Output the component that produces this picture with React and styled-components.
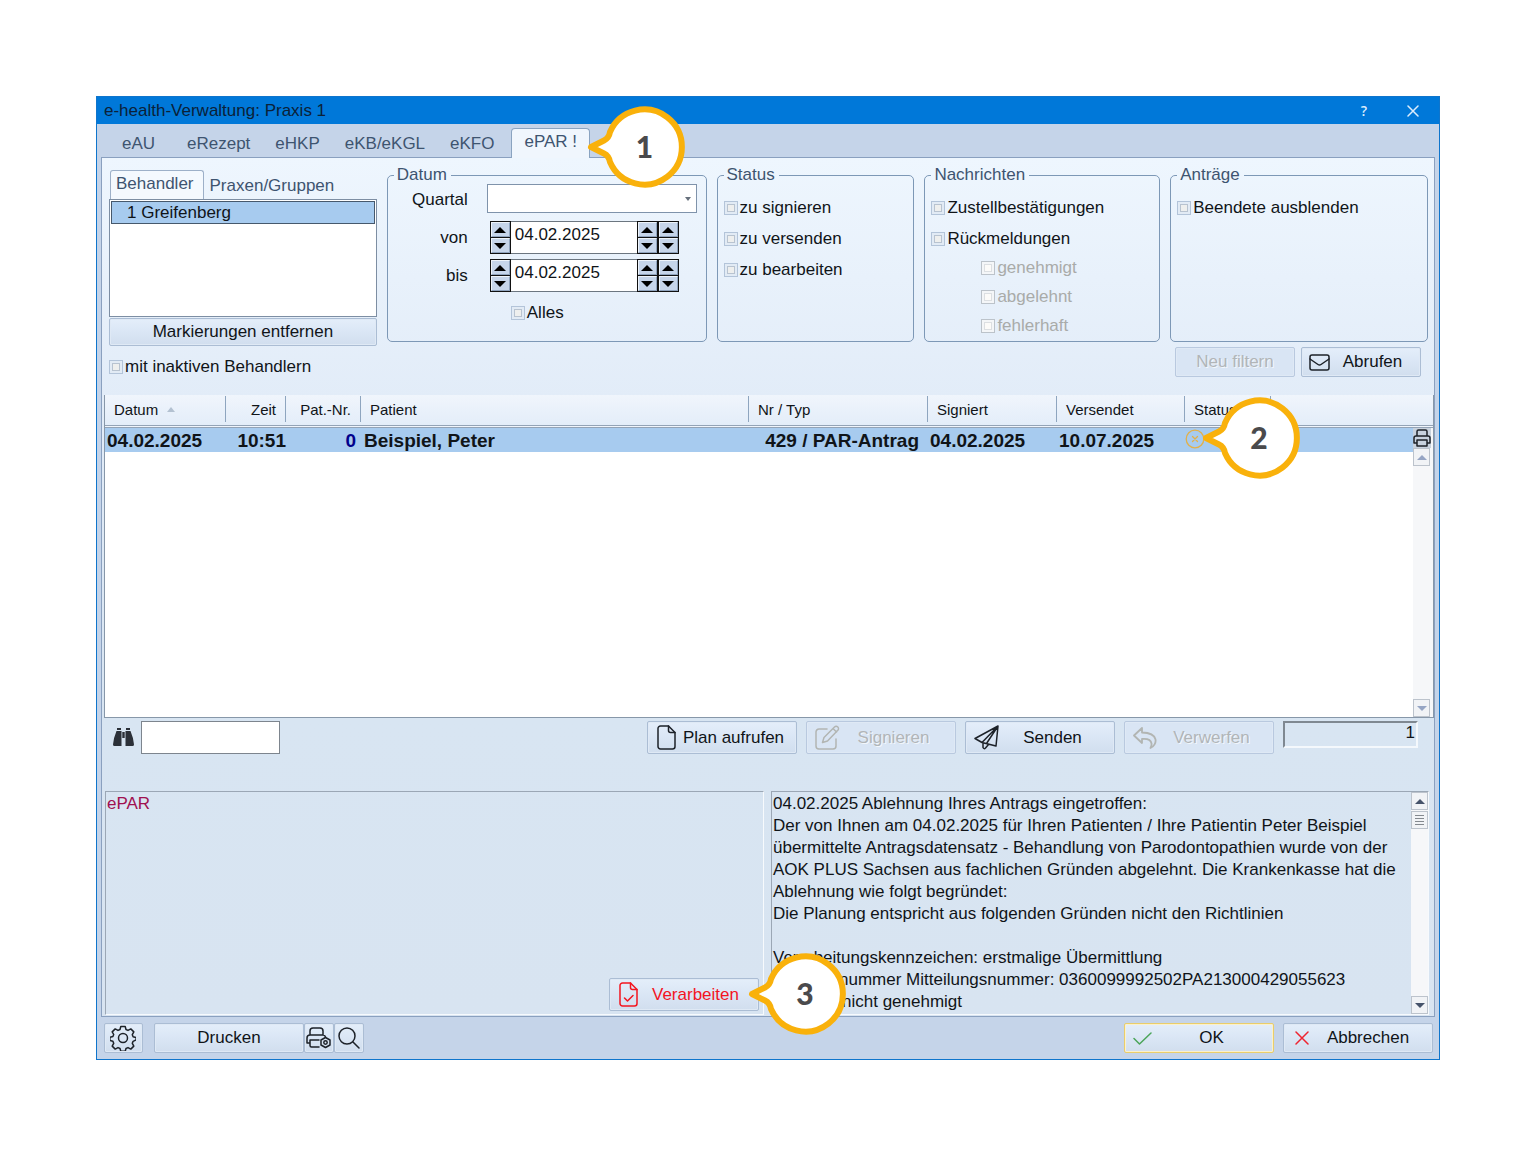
import React from 'react';
import styled, { createGlobalStyle } from 'styled-components';

const GlobalStyle = createGlobalStyle`
  *, *::before, *::after {
    box-sizing: border-box;
  }

  body {
    margin: 0;
    background: #fff;
    color: #101418;
    font-family: 'Liberation Sans', Arial, sans-serif;
    font-size: 17px;
    line-height: 20px;
  }

  button, input, select {
    font: inherit;
    color: inherit;
  }
`;

const Page = styled.main`
  padding: 96px;
`;

const Window = styled.section`
  border: 1px solid #0f75cc;
  background: #c5d4e9;
`;

/* ---------- title bar ---------- */

const TitleBar = styled.header`
  display: flex;
  align-items: center;
  height: 27px;
  padding: 0 16px 0 7px;
  background: #0078d9;
`;

const Title = styled.h1`
  flex: 1;
  margin: 0;
  font-size: 17px;
  font-weight: 400;
  color: #0b2138;
`;

const TitleButton = styled.button`
  display: flex;
  align-items: center;
  justify-content: center;
  width: 20px;
  height: 20px;
  margin-left: 29px;
  padding: 0;
  border: 0;
  background: none;
  color: #dcedfc;
  font-family: 'Open Sans', sans-serif;
  font-size: 14px;
  font-weight: 600;
`;

/* ---------- tabs ---------- */

const MainTabs = styled.nav`
  display: flex;
  align-items: flex-end;
  gap: 1px;
  height: 33px;
  padding-left: 13px;
`;

const MainTab = styled.button`
  position: relative;
  z-index: ${(p) => (p.$active ? 2 : 0)};
  height: ${(p) => (p.$active ? '30px' : '27px')};
  min-width: ${(p) => p.$width || '0'};
  margin: ${(p) => (p.$active ? '0 0 -1px 4px' : '0')};
  padding: ${(p) => (p.$active ? '0 12px 4px' : '0 12px')};
  border: ${(p) => (p.$active ? '1px solid #8aa3c0' : '0')};
  border-bottom: 0;
  border-radius: 4px 4px 0 0;
  background: ${(p) => (p.$active ? '#f0f6fd' : 'none')};
  color: #3e5470;
  text-align: left;
  white-space: nowrap;
`;

const Panel = styled.div`
  margin: 0 4px;
  border: 1px solid #8aa0bf;
  background: linear-gradient(#eef6fe, #e2ecf8 240px, #d8e5f2 560px, #d8e4f1);
`;

/* ---------- filters ---------- */

const Filters = styled.div`
  display: grid;
  grid-template-columns: 268fr 320fr 198fr 236fr 258fr;
  grid-template-rows: auto 30px;
  gap: 5px 10px;
  padding: 8px 6px 18px 7px;
`;

const DoctorColumn = styled.div`
  display: flex;
  flex-direction: column;
  grid-row: 1 / 3;
  padding-top: 4px;
`;

const SmallTabs = styled.div`
  display: flex;
  padding-left: 1px;
`;

const SmallTab = styled.button`
  height: 29px;
  padding: ${(p) => (p.$active ? '0 9px 2px 5px' : '3px 6px 0')};
  border: ${(p) => (p.$active ? '1px solid #9db0c8' : '0')};
  border-bottom: 0;
  border-radius: 3px 3px 0 0;
  background: ${(p) => (p.$active ? '#f4f9fe' : 'none')};
  color: #3e5470;
  white-space: nowrap;
`;

const ListBox = styled.ul`
  min-height: 118px;
  margin: 0 0 1px;
  padding: 1px;
  border: 1px solid #7d8ea3;
  background: #fff;
  list-style: none;
`;

const ListItem = styled.li`
  height: 23px;
  padding: 1px 0 0 15px;
  border: 1px dotted #222;
  outline: 1px solid #46586c;
  outline-offset: -1px;
  background: #a7cbef;
`;

const Check = styled.label`
  display: flex;
  align-items: center;
  gap: 2px;
  color: ${(p) => (p.$disabled ? '#a9aba9' : 'inherit')};
  white-space: nowrap;

  input {
    flex: none;
    appearance: none;
    width: 14px;
    height: 14px;
    margin: 0;
    border: 1px solid #b3c4d9;
    background: ${(p) => (p.$disabled ? '#fcfbf9' : '#eeefee')};
    box-shadow: inset 0 0 0 2px #e2ebf5, inset 0 0 0 3px #b8c3d0;
  }

  input:disabled {
    border-color: #bcc3ca;
    box-shadow: inset 0 0 0 2px #f4f6f8, inset 0 0 0 3px #dcdfe2;
  }
`;

const InactiveRow = styled.div`
  padding-top: 11px;
`;

const Group = styled.fieldset`
  min-width: 0;
  height: 176px;
  margin: 0;
  padding: 0 6px;
  border: 1px solid #7d98b6;
  border-radius: 5px;

  legend {
    padding: 0 4px 0 3px;
    color: #3e5470;
    line-height: 18px;
  }
`;

const Checks = styled.div`
  display: flex;
  flex-direction: column;
  gap: 11px;
  padding-top: 14px;
`;

const SubChecks = styled.div`
  display: flex;
  flex-direction: column;
  gap: 9px;
  margin-top: -2px;
  padding-left: 50px;
`;

const DateForm = styled.div`
  display: grid;
  grid-template-columns: 74px 1fr;
  column-gap: 19px;
  row-gap: 5px;
  align-items: center;

  > label {
    text-align: right;
  }
`;

const SelectWrap = styled.div`
  position: relative;
  max-width: 210px;
  margin-bottom: 3px;

  &::after {
    content: '';
    position: absolute;
    top: 13px;
    right: 6px;
    border: 3px solid transparent;
    border-top: 4px solid #66707c;
    border-bottom: 0;
    pointer-events: none;
  }
`;

const Select = styled.select`
  display: block;
  appearance: none;
  width: 100%;
  height: 29px;
  border: 1px solid #7f93ab;
  border-radius: 0;
  background: #fff;
`;

const DateBox = styled.div`
  display: flex;
  height: 33px;
  padding-left: 3px;
`;

const DateInput = styled.input`
  width: 126px;
  min-width: 0;
  padding: 0 4px 5px;
  border: 1px solid #6c7680;
  border-width: 1px 0;
  border-radius: 0;
  background: #fff;
`;

const Spinner = styled.span`
  display: flex;
  flex-direction: column;
  width: 21px;
  border: 1px solid #111;
  background: #111;
  gap: 1px;
`;

const SpinButton = styled.button`
  display: flex;
  flex: 1;
  align-items: center;
  justify-content: center;
  padding: 0;
  border: 1px solid;
  border-color: #eef4fb #8fa3bd #8fa3bd #eef4fb;
  background: #c6d5ea;

  &::before {
    content: '';
    border: 6px solid transparent;
    border-${(p) => (p.$up ? 'bottom' : 'top')}: 6px solid #000;
    border-${(p) => (p.$up ? 'top' : 'bottom')}: 0;
  }
`;

const AllRow = styled.div`
  padding: 6px 0 0 24px;
`;

const FilterActions = styled.div`
  display: flex;
  grid-column: 2 / -1;
  justify-content: flex-end;
  gap: 6px;
  padding-right: 7px;
`;

const Button = styled.button`
  position: relative;
  display: flex;
  flex: none;
  align-items: center;
  gap: ${(p) => p.$gap || '0'};
  width: ${(p) => p.$width || '150px'};
  height: ${(p) => p.$height || '33px'};
  padding: 0 ${(p) => p.$pad || '8px'};
  border: 1px solid ${(p) => (p.$primary ? '#e9cd6b' : '#abbdd4')};
  border-radius: 2px;
  background: linear-gradient(#e4eefa, #dae6f5 50%, #d1deee);
  box-shadow: inset 0 0 0 1px ${(p) => (p.$primary ? '#fbf1cb' : '#dfe9f5')};
  color: ${(p) => (p.$danger ? '#f3151f' : '#101418')};
  white-space: nowrap;

  &:disabled {
    border-color: #b9c9df;
    background: #d9e5f4;
    color: #b1b5b8;
    text-shadow: 1px 1px 0 #f3f7fb;
  }

  svg {
    flex: none;
  }
`;

const Caption = styled.span`
  flex: 1;
  text-align: center;
`;

/* ---------- table ---------- */

const TableArea = styled.div`
  display: flex;
  margin: 0 0 0 2px;
`;

const TableBox = styled.div`
  flex: 1;
  min-width: 0;
  height: 323px;
  border: 1px solid #8797a9;
  border-width: 0 0 1px 1px;
  background: #fff;
`;

const Table = styled.table`
  width: 100%;
  table-layout: fixed;
  border-collapse: separate;
  border-spacing: 0;
`;

const Th = styled.th`
  height: 33px;
  padding: 0 0 2px;
  border-bottom: 3px double #93a3b6;
  background: linear-gradient(#f0f5fc, #e3edf9);
  font-size: 15px;
  font-weight: 400;
  text-align: ${(p) => p.$align || 'left'};
  white-space: nowrap;

  span {
    display: block;
    padding: 4px 9px 2px;
    border-right: 1px solid ${(p) => (p.$last ? 'transparent' : '#8ea5bf')};
  }
`;

const SortMark = styled.i`
  display: inline-block;
  margin: 0 0 3px 9px;
  border: 4px solid transparent;
  border-top: 0;
  border-bottom: 5px solid #b3c1d1;
`;

const Td = styled.td`
  height: 24px;
  padding: 1px ${(p) => p.$end || '3px'} 0 ${(p) => p.$start || '3px'};
  background: #a7cbef;
  color: ${(p) => p.$color || 'inherit'};
  font-size: 19px;
  font-weight: 700;
  text-align: ${(p) => p.$align || 'left'};
  white-space: nowrap;
`;

const StatusMark = styled.span`
  position: relative;
  display: block;
  width: 20px;
  height: 20px;
  margin: -4px 0 0 -3px;

  > svg {
    display: block;
  }
`;

const TableSide = styled.div`
  display: flex;
  flex-direction: column;
  width: 21px;
  border: 1px solid #8797a9;
  border-width: 0 1px 1px 0;
  background: #f6f7f9;
`;

const TableSideHead = styled.div`
  height: 33px;
  border-bottom: 3px double #93a3b6;
  background: linear-gradient(#f0f5fc, #e3edf9);
`;

const PrintButton = styled.button`
  display: flex;
  align-items: center;
  justify-content: center;
  width: 18px;
  height: 20px;
  padding: 0;
  border: 0;
  background: #c8d2de;
`;

const ScrollButton = styled.button`
  display: flex;
  align-items: center;
  justify-content: center;
  width: 17px;
  height: 18px;
  padding: 0;
  border: 1px solid #bcc3cc;
  background: #f1f3f6;

  &::before {
    content: '';
    border: 5px solid transparent;
    border-${(p) => (p.$up ? 'bottom' : 'top')}: 5px solid ${(p) => p.$tone || '#96a5c4'};
    border-${(p) => (p.$up ? 'top' : 'bottom')}: 0;
  }
`;

const ScrollGap = styled.div`
  flex: 1;
`;

/* ---------- toolbar ---------- */

const Toolbar = styled.div`
  display: flex;
  gap: 9px;
  padding: 3px 16px 37px 11px;
`;

const Search = styled.label`
  display: flex;
  flex: 1;
  align-items: center;
  gap: 7px;

  input {
    width: 139px;
    height: 33px;
    border: 1px solid #7d858e;
    border-radius: 0;
    background: #fff;
  }
`;

const Counter = styled.output`
  width: 135px;
  height: 27px;
  padding-right: 1px;
  border: 2px solid;
  border-color: #7f8891 #f4f8fc #f4f8fc #7f8891;
  text-align: right;
`;

/* ---------- details ---------- */

const Details = styled.div`
  display: grid;
  grid-template-columns: 659fr 658fr;
  gap: 7px;
  padding: 0 5px 1px 3px;
`;

const Sunken = styled.div`
  display: flex;
  min-width: 0;
  border: 1px solid;
  border-color: #9ba7b5 #f7fafd #f7fafd #9ba7b5;
`;

const Kind = styled.div`
  display: flex;
  flex: 1;
  flex-direction: column;
  justify-content: space-between;
  padding: 2px 4px 3px 1px;
  color: #a01050;

  > button {
    align-self: flex-end;
  }
`;

const Message = styled.div`
  flex: 1;
  min-width: 0;
  min-height: 222px;
  padding: 1px 0 0 1px;
`;

const Line = styled.div`
  min-height: 22px;
  padding-left: ${(p) => p.$indent || '0'};
  line-height: 22px;
  white-space: nowrap;
`;

const ScrollBar = styled.div`
  display: flex;
  flex: none;
  flex-direction: column;
  width: 17px;
  background: #f6f7f9;
`;

const Thumb = styled.div`
  display: flex;
  flex-direction: column;
  justify-content: center;
  gap: 1px;
  height: 18px;
  margin-top: 1px;
  padding: 0 3px;
  border: 1px solid #bcc3cc;
  background: #f1f3f6;

  i {
    height: 1px;
    margin-bottom: 1px;
    background: #84898f;
  }
`;

/* ---------- footer ---------- */

const Footer = styled.footer`
  display: flex;
  gap: 9px;
  padding: 6px 6px 6px 7px;
`;

const PrintGroup = styled.div`
  display: flex;
  flex: 1;
  margin-left: 2px;
`;

/* ---------- numbered callouts ---------- */

const CalloutBox = styled.span`
  position: absolute;
  top: ${(p) => p.$top};
  left: ${(p) => p.$left};
  z-index: 5;
  width: 98px;
  height: 82px;
  padding-left: 16px;
  color: #4a4a4c;
  font-family: Lato, sans-serif;
  font-size: 30px;
  font-weight: 900;
  line-height: 80px;
  text-align: center;
  text-shadow: none;

  svg {
    position: absolute;
    inset: 0;
    overflow: visible;
  }

  b {
    position: relative;
    display: block;
  }
`;

function Callout({ number, top, left }) {
  return (
    <CalloutBox $top={top} $left={left}>
      <svg width="98" height="82" viewBox="0 0 98 82">
        <path
          d="M4 41 L17 34.500 Q22 32 23 26 A37.500 37.500 0 1 1 23 56 Q22 50 17 47.500 Z"
          fill="#fff"
          stroke="#f9b10b"
          strokeWidth="6"
          strokeLinejoin="round"
        />
      </svg>
      <b>{number}</b>
    </CalloutBox>
  );
}

/* ---------- icons ---------- */

const Icon = ({ w, h, stroke = '#1d2229', width = 1.5, children }) => (
  <svg
    width={w}
    height={h}
    viewBox={`0 0 ${w} ${h}`}
    fill="none"
    stroke={stroke}
    strokeWidth={width}
    strokeLinecap="round"
    strokeLinejoin="round"
    aria-hidden="true"
  >
    {children}
  </svg>
);

const CloseIcon = () => (
  <Icon w={12} h={12} stroke="#dcedfc"><path d="M1 1l10 10M11 1L1 11" /></Icon>
);

const MailIcon = () => (
  <Icon w={21} h={17}>
    <rect x="1" y="1" width="19" height="15" rx="2" />
    <path d="M1 5l8 5.500q1.500 1 3 0L20 5" />
  </Icon>
);

const PageIcon = () => (
  <Icon w={19} h={25}>
    <path d="M3.500 1H11.500L18 7.500V21.500a2.500 2.500 0 0 1-2.500 2.500H3.500A2.500 2.500 0 0 1 1 21.500V3.500A2.500 2.500 0 0 1 3.500 1z" />
    <path d="M11.500 1v4.500a2 2 0 0 0 2 2H18" />
  </Icon>
);

const PageCheckIcon = () => (
  <Icon w={19} h={25} stroke="#f3151f">
    <path d="M3.500 1H11.500L18 7.500V21.500a2.500 2.500 0 0 1-2.500 2.500H3.500A2.500 2.500 0 0 1 1 21.500V3.500A2.500 2.500 0 0 1 3.500 1z" />
    <path d="M11.500 1v4.500a2 2 0 0 0 2 2H18M5.500 16l3 3L14 13.500" />
  </Icon>
);

const EditIcon = () => (
  <Icon w={25} h={25} stroke="#b2b5b2">
    <path d="M12 4H4a3 3 0 0 0-3 3v14a3 3 0 0 0 3 3h14a3 3 0 0 0 3-3v-7" />
    <path d="M7.500 17.500l1.500-5L19.500 2a2.200 2.200 0 0 1 3.300 3.300L12.500 16zM18 3.500l3.500 3.500" />
  </Icon>
);

const SendIcon = () => (
  <Icon w={25} h={25}>
    <path d="M24 1L1 13.500L8 17.500L22 21ZM8 17.500L24 1L12.500 18.500M9 18V22.500q1 2 2.500.5L14.500 19.500" />
  </Icon>
);

const UndoIcon = () => (
  <Icon w={25} h={22} stroke="#b2b5b2" width={1.8}>
    <path d="M9 1L1 8.500 9 16v-4c6-.5 9 1 9.500 4.500q.3 2-1 4.500c7-3 9-15-8.500-15.500z" />
  </Icon>
);

const BinocularsIcon = () => (
  <svg width="21" height="19" viewBox="0 0 21 19" fill="#2b3038" aria-hidden="true">
    <path d="M4 0h4v2H4zM13 0h4v2h-4zM3.500 3H8.500V18H1.500Q0 18 0 16.500Q.5 10 3.500 3zM12.500 3H17.500Q20.500 10 21 16.500Q21 18 19.500 18H12.500zM9.300 4h2.400v6H9.300z" />
  </svg>
);

const GearIcon = () => (
  <Icon w={26} h={26}>
    <circle cx="13" cy="13" r="4.500" />
    <path d="M10.800 1.500h4.400l.8 3 2 .9 2.800-1.500 3 3-1.500 2.800.8 2 3 .8v2.300l-3 1.500-.8 2 1.500 2.800-3 3-2.800-1.500-2 .9-.8 2.800h-4.400l-.8-2.800-2-.9-2.800 1.500-3-3 1.500-2.800-.8-2-3-.9v-3l3-.9.800-2-1.500-2.600 3-3L8 5.400l2-.9z" />
  </Icon>
);

const PrinterIcon = () => (
  <Icon w={18} h={18}>
    <path d="M4 7V2.500Q4 1 5.500 1h7Q14 1 14 2.500V7M4 14H1V9q0-2 2-2h12q2 0 2 2v5h-3M4 11h10v6H4z" />
  </Icon>
);

const PrinterSetupIcon = () => (
  <Icon w={26} h={22}>
    <path d="M4 8V4Q4 1 7 1h7q3 0 3 3v4M4 16H1V11q0-3 3-3h13q2 0 2.500 2M4 13h9M4 13v5.500Q4 20 5.500 20H13" />
    <path d="M19.500 10.500l4.500 2.500v5l-4.500 2.500L15 18v-5z" />
    <circle cx="19.500" cy="15.500" r="1.700" />
  </Icon>
);

const MagnifierIcon = () => (
  <Icon w={22} h={22}>
    <circle cx="9" cy="9" r="8" />
    <path d="M15 15l6 6" />
  </Icon>
);

const OkIcon = () => (
  <Icon w={19} h={13} stroke="#4ba559"><path d="M1 6.500l5.500 5.500L18 1" /></Icon>
);

const CancelIcon = () => (
  <Icon w={14} h={14} stroke="#ee2430"><path d="M1 1l12 12M13 1L1 13" /></Icon>
);

const RejectedIcon = () => (
  <Icon w={20} h={20} stroke="#e2b04a" width={1.3}>
    <circle cx="10" cy="10" r="8.800" />
    <path d="M7.500 7.500l5 5M12.500 7.500l-5 5" />
  </Icon>
);

/* ---------- parts ---------- */

function CheckBox({ label, disabled }) {
  return (
    <Check $disabled={disabled}>
      <input type="checkbox" disabled={disabled} />
      {label}
    </Check>
  );
}

function Spin({ name }) {
  return (
    <Spinner>
      <SpinButton type="button" $up aria-label={`${name} erhöhen`} />
      <SpinButton type="button" aria-label={`${name} verringern`} />
    </Spinner>
  );
}

function DateField({ id }) {
  return (
    <DateBox>
      <Spin name="Tag" />
      <DateInput id={id} defaultValue="04.02.2025" />
      <Spin name="Monat" />
      <Spin name="Jahr" />
    </DateBox>
  );
}

const message = [
  { text: '04.02.2025 Ablehnung Ihres Antrags eingetroffen:' },
  { text: 'Der von Ihnen am 04.02.2025 für Ihren Patienten / Ihre Patientin Peter Beispiel' },
  { text: 'übermittelte Antragsdatensatz - Behandlung von Parodontopathien wurde von der' },
  { text: 'AOK PLUS Sachsen aus fachlichen Gründen abgelehnt. Die Krankenkasse hat die' },
  { text: 'Ablehnung wie folgt begründet:' },
  { text: 'Die Planung entspricht aus folgenden Gründen nicht den Richtlinien' },
  { text: '' },
  { text: 'Verarbeitungskennzeichen: erstmalige Übermittlung' },
  { text: 'nummer Mitteilungsnummer: 0360099992502PA213000429055623', indent: '66px' },
  { text: 'nicht genehmigt', indent: '69px' },
];

function FilterBar() {
  return (
    <Filters>
      <DoctorColumn>
        <SmallTabs>
          <SmallTab type="button" $active>Behandler</SmallTab>
          <SmallTab type="button">Praxen/Gruppen</SmallTab>
        </SmallTabs>
        <ListBox role="listbox" aria-label="Behandler">
          <ListItem role="option" aria-selected="true">1 Greifenberg</ListItem>
        </ListBox>
        <Button type="button" $width="100%" $height="28px">
          <Caption>Markierungen entfernen</Caption>
        </Button>
        <InactiveRow>
          <CheckBox label="mit inaktiven Behandlern" />
        </InactiveRow>
      </DoctorColumn>

      <Group>
        <legend>Datum</legend>
        <DateForm>
          <label htmlFor="quartal">Quartal</label>
          <SelectWrap>
            <Select id="quartal" defaultValue=""><option value="" /></Select>
          </SelectWrap>
          <label htmlFor="von">von</label>
          <DateField id="von" />
          <label htmlFor="bis">bis</label>
          <DateField id="bis" />
          <span />
          <AllRow><CheckBox label="Alles" /></AllRow>
        </DateForm>
      </Group>

      <Group>
        <legend>Status</legend>
        <Checks>
          <CheckBox label="zu signieren" />
          <CheckBox label="zu versenden" />
          <CheckBox label="zu bearbeiten" />
        </Checks>
      </Group>

      <Group>
        <legend>Nachrichten</legend>
        <Checks>
          <CheckBox label="Zustellbestätigungen" />
          <CheckBox label="Rückmeldungen" />
          <SubChecks>
            <CheckBox label="genehmigt" disabled />
            <CheckBox label="abgelehnt" disabled />
            <CheckBox label="fehlerhaft" disabled />
          </SubChecks>
        </Checks>
      </Group>

      <Group>
        <legend>Anträge</legend>
        <Checks>
          <CheckBox label="Beendete ausblenden" />
        </Checks>
      </Group>

      <FilterActions>
        <Button type="button" $width="120px" $height="30px" disabled>
          <Caption>Neu filtern</Caption>
        </Button>
        <Button type="button" $width="120px" $height="30px" $pad="7px" $gap="2px">
          <MailIcon />
          <Caption>Abrufen</Caption>
        </Button>
      </FilterActions>
    </Filters>
  );
}

function RequestTable() {
  return (
    <TableArea>
      <TableBox>
        <Table>
          <colgroup>
            <col width="121" />
            <col width="60" />
            <col width="75" />
            <col />
            <col width="179" />
            <col width="129" />
            <col width="128" />
            <col width="86" />
            <col width="142" />
          </colgroup>
          <thead>
            <tr>
              <Th><span>Datum<SortMark /></span></Th>
              <Th $align="right"><span>Zeit</span></Th>
              <Th $align="right"><span>Pat.-Nr.</span></Th>
              <Th><span>Patient</span></Th>
              <Th><span>Nr / Typ</span></Th>
              <Th><span>Signiert</span></Th>
              <Th><span>Versendet</span></Th>
              <Th><span>Status</span></Th>
              <Th $last><span>&nbsp;</span></Th>
            </tr>
          </thead>
          <tbody>
            <tr>
              <Td $start="2px">04.02.2025</Td>
              <Td $align="right" $end="0">10:51</Td>
              <Td $align="right" $end="5px" $color="#00008b">0</Td>
              <Td>Beispiel, Peter</Td>
              <Td $align="right" $end="9px">429 / PAR-Antrag</Td>
              <Td $start="2px">04.02.2025</Td>
              <Td $start="2px">10.07.2025</Td>
              <Td>
                <StatusMark>
                  <RejectedIcon />
                  <Callout number={2} top="-32px" left="17px" />
                </StatusMark>
              </Td>
              <Td />
            </tr>
          </tbody>
        </Table>
      </TableBox>
      <TableSide>
        <TableSideHead />
        <PrintButton type="button" aria-label="Liste drucken"><PrinterIcon /></PrintButton>
        <ScrollButton type="button" $up aria-label="Nach oben" />
        <ScrollGap />
        <ScrollButton type="button" aria-label="Nach unten" />
      </TableSide>
    </TableArea>
  );
}

const App = () => {
  return (
    <Page>
      <GlobalStyle />
      <Window>
        <TitleBar>
          <Title>e-health-Verwaltung: Praxis 1</Title>
          <TitleButton type="button">?</TitleButton>
          <TitleButton type="button" aria-label="Schließen"><CloseIcon /></TitleButton>
        </TitleBar>

        <MainTabs>
          <MainTab type="button" $width="64px">eAU</MainTab>
          <MainTab type="button">eRezept</MainTab>
          <MainTab type="button">eHKP</MainTab>
          <MainTab type="button">eKB/eKGL</MainTab>
          <MainTab type="button">eKFO</MainTab>
          <MainTab type="button" $active>
            ePAR !
            <Callout number={1} top="-23px" left="75px" />
          </MainTab>
        </MainTabs>

        <Panel>
          <FilterBar />
          <RequestTable />

          <Toolbar>
            <Search>
              <BinocularsIcon />
              <input type="text" aria-label="Suchen" />
            </Search>
            <Button type="button" $pad="9px" $gap="4px"><PageIcon /><Caption>Plan aufrufen</Caption></Button>
            <Button type="button" disabled><EditIcon /><Caption>Signieren</Caption></Button>
            <Button type="button"><SendIcon /><Caption>Senden</Caption></Button>
            <Button type="button" disabled><UndoIcon /><Caption>Verwerfen</Caption></Button>
            <Counter>1</Counter>
          </Toolbar>

          <Details>
            <Sunken>
              <Kind>
                ePAR
                <Button type="button" $danger $pad="9px" $gap="4px">
                  <PageCheckIcon />
                  <Caption>Verarbeiten</Caption>
                  <Callout number={3} top="-26px" left="138px" />
                </Button>
              </Kind>
            </Sunken>
            <Sunken>
              <Message>
                {message.map((line, index) => (
                  <Line key={index} $indent={line.indent}>{line.text}</Line>
                ))}
              </Message>
              <ScrollBar>
                <ScrollButton type="button" $up $tone="#46536a" aria-label="Text nach oben" />
                <Thumb><i /><i /><i /><i /></Thumb>
                <ScrollGap />
                <ScrollButton type="button" $tone="#46536a" aria-label="Text nach unten" />
              </ScrollBar>
            </Sunken>
          </Details>
        </Panel>

        <Footer>
          <Button type="button" $width="39px" $height="30px" $pad="5px" aria-label="Einstellungen">
            <GearIcon />
          </Button>
          <PrintGroup>
            <Button type="button" $height="30px"><Caption>Drucken</Caption></Button>
            <Button type="button" $width="30px" $height="30px" $pad="1px" aria-label="Drucker einrichten">
              <PrinterSetupIcon />
            </Button>
            <Button type="button" $width="30px" $height="30px" $pad="3px" aria-label="Vorschau">
              <MagnifierIcon />
            </Button>
          </PrintGroup>
          <Button type="button" $height="30px" $gap="6px" $primary><OkIcon /><Caption>OK</Caption></Button>
          <Button type="button" $height="30px" $gap="6px" $pad="11px"><CancelIcon /><Caption>Abbrechen</Caption></Button>
        </Footer>
      </Window>
    </Page>
  );
};

export default App;
